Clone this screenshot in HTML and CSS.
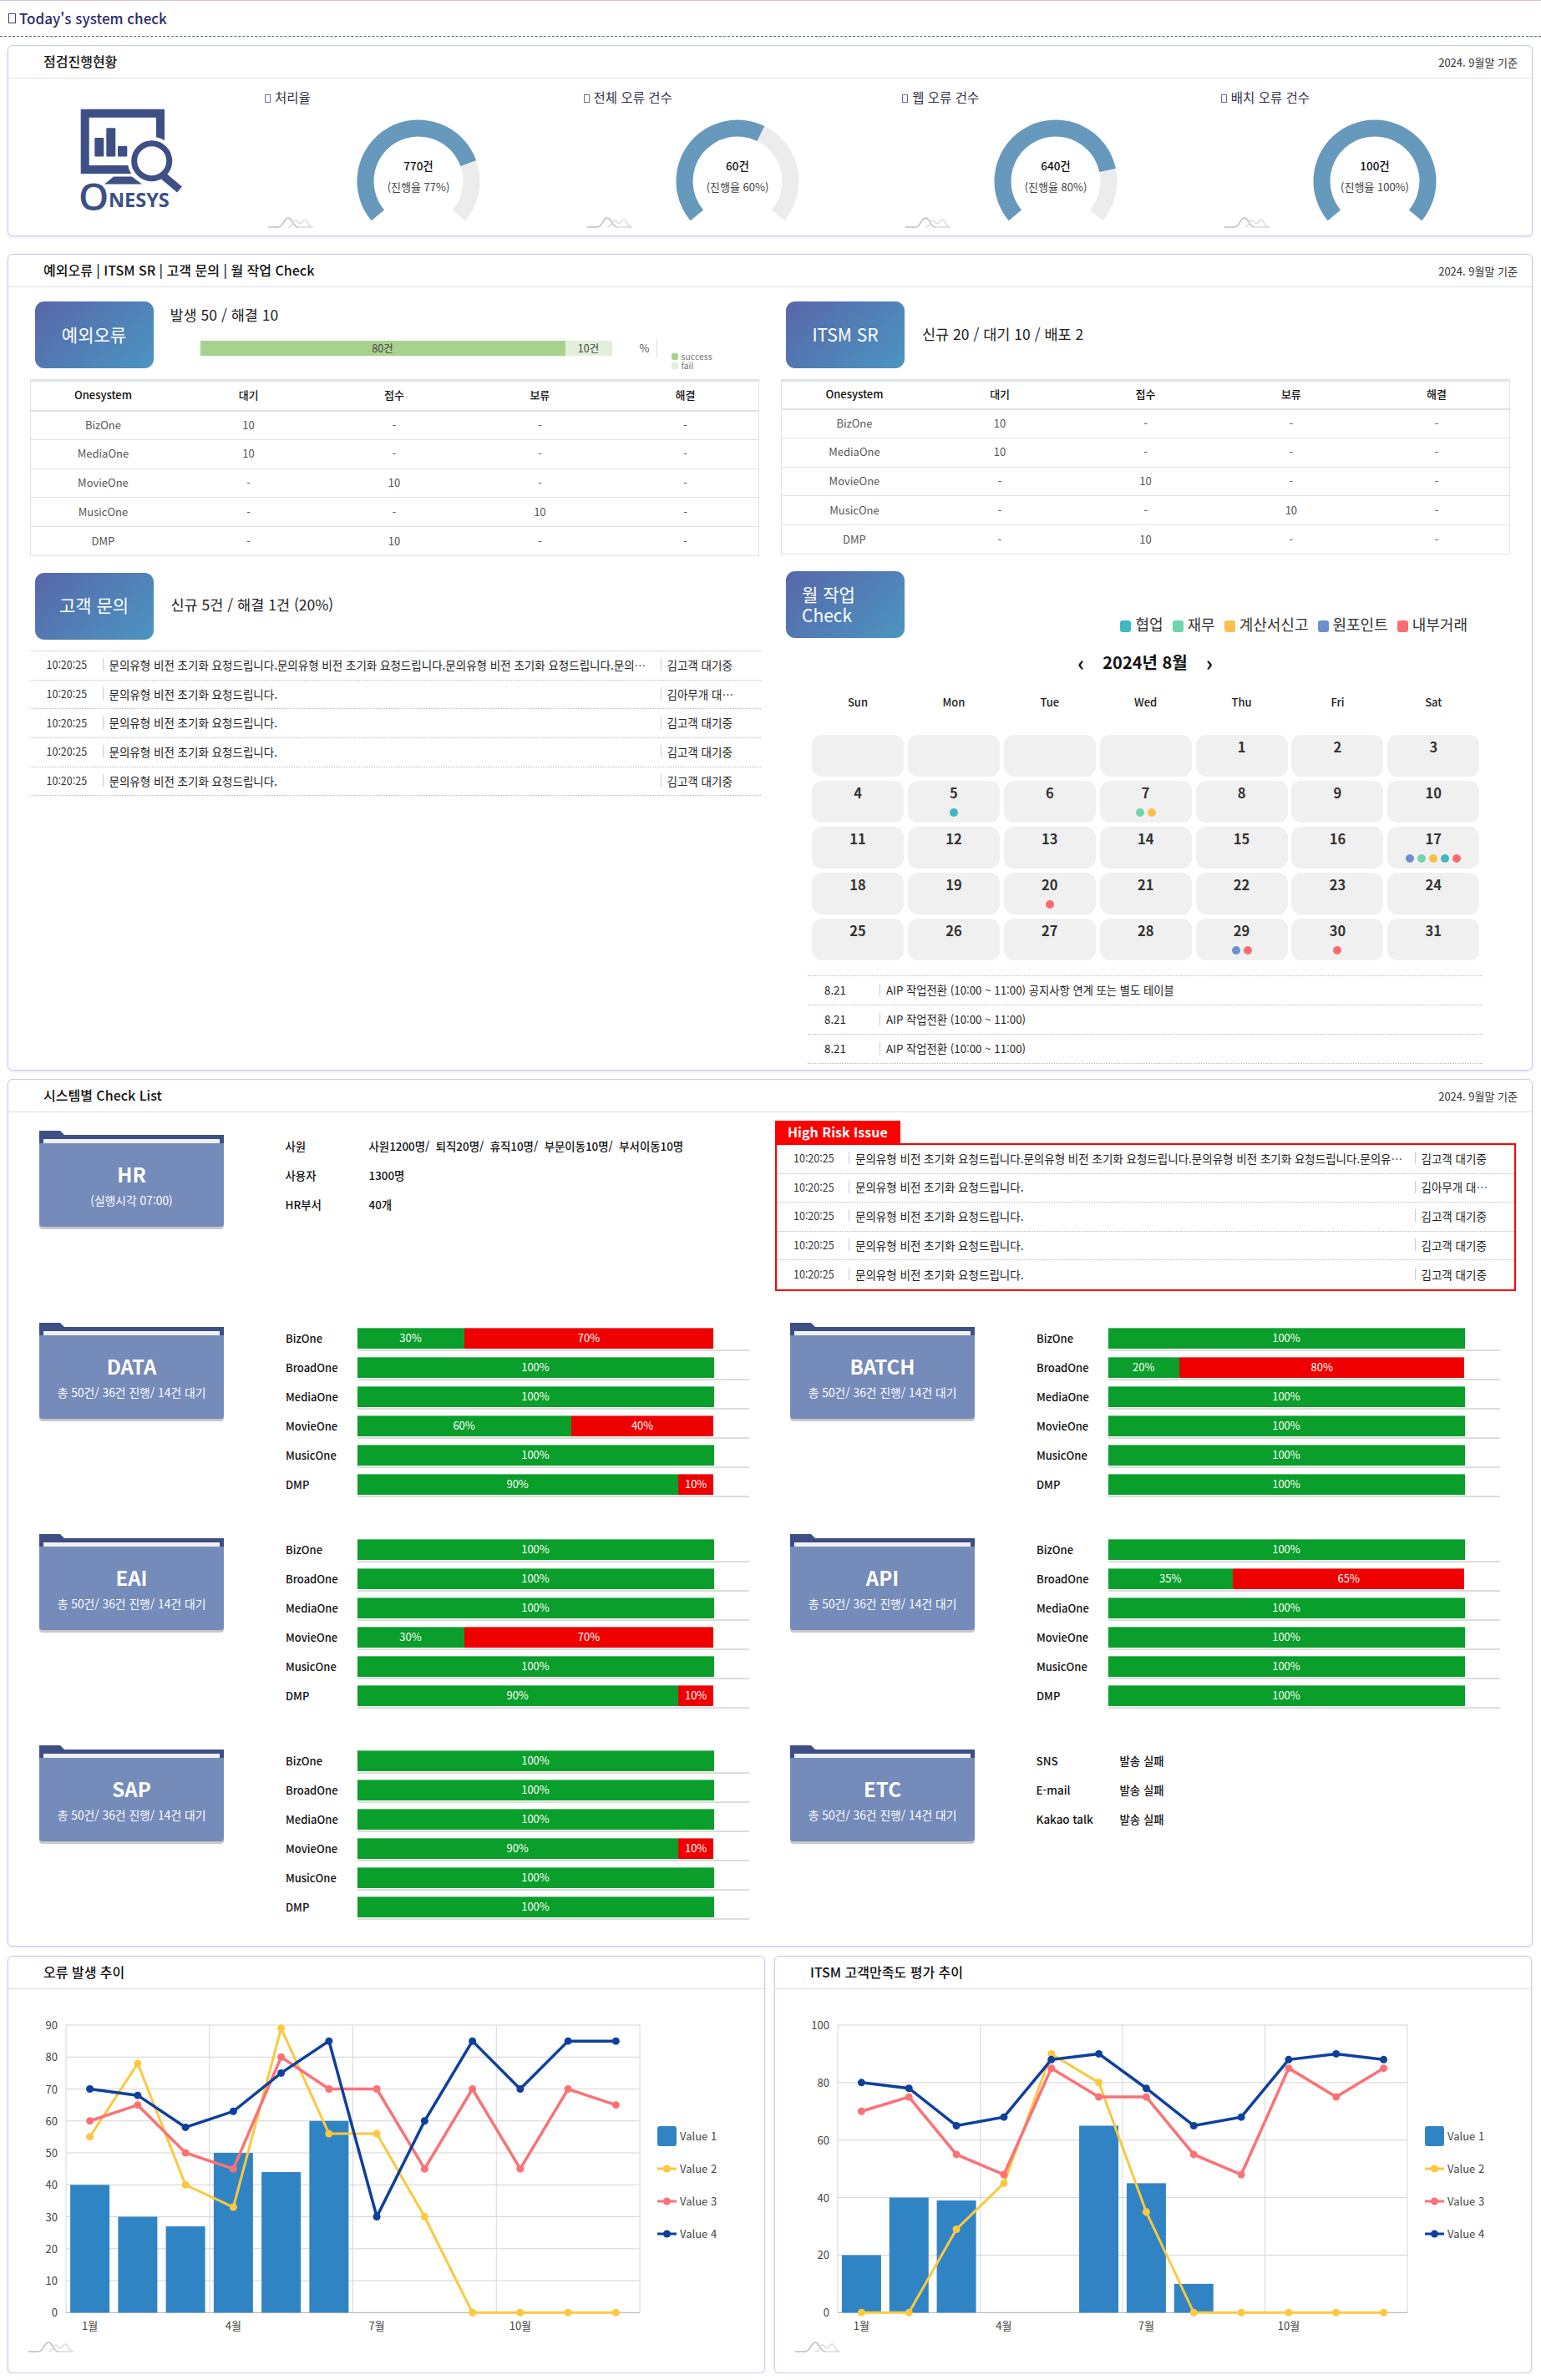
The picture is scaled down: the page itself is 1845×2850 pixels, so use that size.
FILE: index.html
```html
<!DOCTYPE html>
<html lang="ko">
<head>
    <meta charset="UTF-8">
    <meta name="viewport" content="width=device-width, initial-scale=1.0">
    <title>Today's system check</title>
    <link rel="stylesheet" href="styles.css">
</head>
<body>
    <div class="page-head"><span class="tofu tofu-big"></span>Today's system check</div>

    <div class="card card-status">
        <div class="card-head"><span class="card-title">점검진행현황</span><span class="card-date">2024. 9월말 기준</span></div>
        <div class="status-body">
            <div class="logo-box">
                <svg class="logo" viewBox="36 20 125 125" width="125" height="125">
                    <path d="M36.700 20.700H137V98H36.700Z M46.700 30.700V88H127V30.700Z" fill="#3d4f85" fill-rule="evenodd"/>
                    <path d="M65 110.500L76 101.500H98L110 110.500Z" fill="#3d4f85"/>
                    <rect x="53.300" y="55" width="11" height="22.500" rx="1" fill="#3d4f85"/>
                    <rect x="67.300" y="43.300" width="11" height="34.200" rx="1" fill="#3d4f85"/>
                    <rect x="81" y="65" width="11.300" height="12.500" rx="1" fill="#3d4f85"/>
                    <circle cx="121.700" cy="82.700" r="29" fill="#fff"/>
                    <path d="M136 101L155 117" stroke="#3d4f85" stroke-width="9" stroke-linecap="butt"/>
                    <circle cx="121.700" cy="82.700" r="21" fill="#fff" stroke="#3d4f85" stroke-width="7"/>
                    <text class="logo-o" x="34" y="142">O</text>
                    <text class="logo-word" x="70" y="138">NESYS</text>
                </svg>
            </div>
            <div class="gauge-grid" id="gauge-grid"></div>
        </div>
    </div>

    <div class="card card-check">
        <div class="card-head"><span class="card-title">예외오류 | ITSM SR | 고객 문의 | 월 작업 Check</span><span class="card-date">2024. 9월말 기준</span></div>
        <div class="check-body">
            <div class="check-col">
                <div class="tile-row">
                    <div class="tile">예외오류</div>
                    <div class="tile-side">
                        <div class="tile-note">발생 50 / 해결 10</div>
                        <div class="stack-wrap">
                            <div class="stack">
                                <div class="stack-ok">80건</div>
                                <div class="stack-fail">10건</div>
                            </div>
                            <span class="stack-unit">%</span>
                            <div class="stack-legend">
                                <div><i class="key key-ok"></i>success</div>
                                <div><i class="key key-fail"></i>fail</div>
                            </div>
                        </div>
                    </div>
                </div>
                <table class="one-table" id="table-error"></table>

                <div class="tile-row tile-row-next">
                    <div class="tile">고객 문의</div>
                    <div class="tile-note tile-note-mid">신규 5건 / 해결 1건 (20%)</div>
                </div>
                <div class="issue-list" id="list-customer"></div>
            </div>

            <div class="check-col">
                <div class="tile-row">
                    <div class="tile">ITSM SR</div>
                    <div class="tile-note tile-note-mid">신규 20 / 대기 10 / 배포 2</div>
                </div>
                <table class="one-table one-table-slim" id="table-sr"></table>

                <div class="tile-row tile-row-next">
                    <div class="tile tile-left">월 작업<br>Check</div>
                    <div class="cal-legend">
                        <span><i class="key-big c-team"></i>협업</span>
                        <span><i class="key-big c-money"></i>재무</span>
                        <span><i class="key-big c-tax"></i>계산서신고</span>
                        <span><i class="key-big c-point"></i>원포인트</span>
                        <span><i class="key-big c-inner"></i>내부거래</span>
                    </div>
                </div>
                <div class="cal-nav"><span class="cal-arrow">‹</span><span class="cal-month">2024년 8월</span><span class="cal-arrow">›</span></div>
                <div class="cal-week" id="cal-week"></div>
                <div class="cal-grid" id="cal-grid"></div>
                <div class="work-list" id="work-list"></div>
            </div>
        </div>
    </div>

    <div class="card card-system">
        <div class="card-head"><span class="card-title">시스템별 Check List</span><span class="card-date">2024. 9월말 기준</span></div>
        <div class="system-grid" id="system-grid"></div>
    </div>

    <div class="chart-row">
        <div class="card card-chart">
            <div class="card-head"><span class="card-title">오류 발생 추이</span></div>
            <svg class="chart" id="chart-error" viewBox="10 2382 905 459"></svg>
        </div>
        <div class="card card-chart">
            <div class="card-head"><span class="card-title">ITSM 고객만족도 평가 추이</span></div>
            <svg class="chart" id="chart-itsm" viewBox="929 2382 905 459"></svg>
        </div>
    </div>

    <script src="script.js"></script>
</body>
</html>
```

FILE: styles.css
```css
* {
    margin: 0;
    padding: 0;
    box-sizing: border-box;
}
body {
    width: 1845px;
    font-family: "Noto Sans CJK KR", "Noto Sans", sans-serif;
    font-size: 13px;
    color: #222;
    background-color: #fff;
}
.page-head {
    display: flex;
    align-items: center;
    height: 44px;
    padding: 0 0 1px 10px;
    border-top: 1px solid #d8c2cc;
    border-bottom: 1px dashed #5d6788;
    font-size: 17px;
    font-weight: 500;
    color: #2c2a6c;
}
.tofu {
    display: inline-block;
    width: 7px;
    height: 10px;
    margin-right: 5px;
    border: 1px solid #6a7090;
}
.tofu-big {
    width: 9px;
    height: 12px;
    margin-right: 4px;
    border-color: #40446a;
}

/* Cards */
.card {
    width: 1826px;
    margin-left: 9px;
    background-color: #fff;
    border: 1px solid #c6ccef;
    border-radius: 6px;
    box-shadow: 0 1px 3px rgba(120, 130, 190, 0.25);
}
.card-head {
    display: flex;
    justify-content: space-between;
    align-items: center;
    height: 39px;
    padding: 0 17px 3px 42px;
    border-bottom: 1px solid #dcdfe9;
}
.card-title {
    font-size: 16px;
    font-weight: 500;
    color: #111;
}
.card-date {
    padding-top: 4px;
    font-size: 13px;
    color: #333;
}
.card-status {
    height: 229px;
    margin-top: 10px;
}
.card-check {
    height: 978px;
    margin-top: 21px;
}
.card-system {
    height: 1039px;
    margin-top: 10px;
}

/* Status gauges */
.status-body {
    display: flex;
}
.logo-box {
    flex: none;
    width: 300px;
    padding: 36px 0 0 86px;
}
.logo-o {
    font-family: "Open Sans", sans-serif;
    font-size: 46px;
    font-weight: 600;
    fill: #3d4f85;
}
.logo-word {
    font-family: "Open Sans", sans-serif;
    font-size: 23.500px;
    font-weight: 700;
    fill: #3d4f85;
}
.gauge-grid {
    display: grid;
    flex: none;
    grid-template-columns: repeat(4, 381.600px);
}
.gauge-cell {
    position: relative;
    height: 188px;
    padding: 11px 0 0 7px;
}
.gauge-label {
    height: 37px;
    font-size: 15.500px;
    color: #334;
}
.gauge {
    display: block;
    margin-left: 109px;
}
.gauge-count {
    font-size: 13.500px;
    font-weight: 500;
    fill: #111;
    text-anchor: middle;
}
.gauge-rate {
    font-size: 13px;
    fill: #444;
    text-anchor: middle;
}
.mark {
    position: absolute;
    left: 11px;
    top: 166px;
}

/* Check section */
.check-body {
    display: grid;
    grid-template-columns: repeat(2, 874px);
    column-gap: 25.500px;
    padding: 17px 0 0 25.500px;
}
.tile-row {
    display: flex;
    height: 80px;
}
.tile-row-next {
    margin-top: 20px;
}
.tile {
    display: flex;
    justify-content: center;
    align-items: center;
    flex: none;
    width: 142px;
    height: 80px;
    margin-left: 6px;
    padding-bottom: 3px;
    border-radius: 11px;
    background-image: linear-gradient(135deg, #5867a8, #4b95c1);
    font-size: 21px;
    color: #fff;
}
.tile-left {
    justify-content: flex-start;
    padding: 0 0 0 19px;
    line-height: 25px;
}
.tile-side {
    margin-left: 20px;
    padding-top: 3px;
}
.tile-note {
    font-size: 17.500px;
    line-height: 25px;
    color: #222;
}
.tile-note-mid {
    align-self: center;
    margin-left: 21px;
    padding-bottom: 4px;
}
.stack-wrap {
    position: relative;
    margin-top: 19px;
    height: 40px;
    width: 620px;
}
.stack {
    display: flex;
    width: 493px;
    height: 18px;
    margin-left: 36px;
    line-height: 18px;
    font-size: 12.500px;
    text-align: center;
    color: #444;
}
.stack-ok {
    width: 437px;
    background-color: #a9d18e;
}
.stack-fail {
    width: 56px;
    background-color: #e2efd9;
}
.stack-unit {
    position: absolute;
    left: 562px;
    top: -2px;
    padding-right: 9px;
    border-right: 1px solid #ddd;
    line-height: 22px;
    color: #555;
}
.stack-legend {
    position: absolute;
    left: 600px;
    top: 13px;
    font-size: 10.500px;
    line-height: 11px;
    color: #777;
    width: 60px;
}
.key {
    display: inline-block;
    width: 8px;
    height: 8px;
    margin-right: 4px;
    border-radius: 2px;
}
.key-ok {
    background-color: #a9d18e;
}
.key-fail {
    background-color: #e2efd9;
}

/* Tables */
.one-table {
    width: 873px;
    margin-top: 13px;
    border-collapse: collapse;
    table-layout: fixed;
    border-left: 1px solid #dfe2e6;
    border-right: 1px solid #dfe2e6;
    border-top: 3px solid #dfe2e6;
}
.one-table th {
    height: 36px;
    padding-bottom: 2px;
    border-bottom: 2px solid #dfe2e6;
    font-size: 13px;
    font-weight: 500;
    color: #111;
}
.one-table td {
    height: 34.800px;
    padding-bottom: 2px;
    border-bottom: 1px solid #dfe2e6;
    font-size: 13px;
    text-align: center;
    color: #555;
}
.one-table-slim {
    margin-bottom: 2px;
}
.one-table-slim th {
    height: 34px;
}

/* Issue rows */
.issue-list {
    width: 875px;
    margin-top: 13px;
    border-top: 1px dotted #bbb;
}
.issue-row {
    display: flex;
    align-items: center;
    height: 34.700px;
    padding-bottom: 2px;
    border-bottom: 1px dotted #bbb;
    font-size: 13.500px;
    color: #222;
}
.issue-time {
    flex: none;
    width: 87px;
    padding-left: 20px;
    font-size: 12.500px;
    color: #333;
}
/* 15px separator drawn as a background so the text line can stay tall enough */
.issue-msg,
.issue-who {
    flex: none;
    background: linear-gradient(#ccc, #ccc) left center / 1px 15px no-repeat;
    line-height: 20px;
    overflow: hidden;
    white-space: nowrap;
    text-overflow: ellipsis;
}
.issue-msg {
    width: 668px;
    padding: 0 8px 0 8px;
}
.issue-who {
    width: 88px;
    padding-left: 8px;
}

/* Calendar */
.cal-legend {
    display: flex;
    align-self: flex-end;
    gap: 11px;
    margin: 0 52px 6px auto;
    height: 21px;
    font-size: 18px;
    line-height: 21px;
    color: #333;
}
.key-big {
    display: inline-block;
    width: 13px;
    height: 14px;
    margin-right: 5px;
    border-radius: 3px;
    vertical-align: -2px;
}
.c-team {
    background-color: #40b8c1;
}
.c-money {
    background-color: #6fd3ae;
}
.c-tax {
    background-color: #f9c04e;
}
.c-point {
    background-color: #6c8fd0;
}
.c-inner {
    background-color: #fb6b72;
}
.cal-nav {
    display: flex;
    justify-content: center;
    align-items: center;
    gap: 22px;
    height: 30px;
    margin-top: 14px;
    width: 872px;
}
.cal-month {
    font-size: 20px;
    font-weight: 700;
    color: #111;
}
.cal-arrow {
    font-size: 25px;
    font-weight: 700;
    line-height: 24px;
    color: #111;
}
.cal-week {
    display: grid;
    grid-template-columns: repeat(7, 110px);
    column-gap: 4.900px;
    margin: 20px 0 0 37px;
    height: 26px;
    font-size: 13px;
    font-weight: 500;
    line-height: 26px;
    text-align: center;
    color: #222;
}
.cal-grid {
    display: grid;
    grid-template-columns: repeat(7, 110px);
    grid-auto-rows: 50px;
    gap: 5px 4.900px;
    margin: 26px 0 0 37px;
}
.cal-day {
    padding-top: 3px;
    border-radius: 12px;
    background-color: #f0f0f0;
    font-size: 16.500px;
    font-weight: 700;
    line-height: 22px;
    text-align: center;
    color: #333;
}
.cal-dots {
    display: flex;
    justify-content: center;
    gap: 4px;
    margin-top: 8px;
}
.cal-dots i {
    width: 10px;
    height: 10px;
    border-radius: 50%;
}
.work-list {
    width: 808px;
    margin: 18px 0 0 32px;
    border-top: 1px dotted #bbb;
}
.work-row {
    display: flex;
    align-items: center;
    height: 35px;
    border-bottom: 1px dotted #bbb;
    font-size: 13.300px;
    color: #222;
}
.work-date {
    flex: none;
    width: 86px;
    padding-left: 20px;
}
.work-text {
    padding-left: 7px;
    border-left: 1px solid #ccc;
    line-height: 15px;
}

/* System list */
.system-grid {
    display: grid;
    grid-template-columns: repeat(2, 899px);
    grid-template-rows: 230px repeat(3, 253px);
    padding: 22px 0 0 37px;
}
.system {
    display: flex;
}
.folder {
    flex: none;
    width: 221px;
}
.folder-tab {
    width: 30px;
    height: 5px;
    background-color: #3f4f86;
    clip-path: polygon(0 0, 25px 0, 30px 100%, 0 100%);
}
.folder-band {
    height: 10px;
    padding: 5px 5px 0;
    background-color: #3f4f86;
}
.folder-band div {
    height: 5px;
    background-color: #f0f1f5;
}
.folder-body {
    height: 100px;
    padding-top: 19px;
    border-radius: 0 0 4px 4px;
    background-color: #758bb9;
    box-shadow: 0 3px 0 #c8c8c8;
    text-align: center;
    color: #fff;
}
.folder-name {
    font-size: 24px;
    font-weight: 700;
    line-height: 36px;
}
.folder-sub {
    margin-top: 4px;
    font-size: 13.800px;
    line-height: 18px;
}
.system-rows {
    margin-left: 74px;
    padding-top: 6px;
}
.info-rows {
    margin-left: 73.500px;
}
.info-row {
    display: flex;
    align-items: center;
    height: 35px;
    font-size: 13.400px;
    font-weight: 500;
    color: #111;
}
.info-row span:first-child {
    width: 100px;
}
.stat-row {
    display: flex;
    height: 35px;
}
.stat-name {
    width: 85.500px;
    height: 25px;
    font-size: 13px;
    font-weight: 500;
    line-height: 25px;
    color: #111;
}
.stat-track {
    width: 469px;
    height: 28px;
    border-bottom: 2px solid #ddd;
}
.stat-bar {
    display: flex;
    width: 427px;
    height: 25px;
    font-size: 13px;
    text-align: center;
    color: #fff;
}
.seg-ok {
    background-color: #0a9e2b;
    border-top: 1px solid #5fc078;
    line-height: 22px;
}
.seg-bad {
    background-color: #ee0000;
    border-top: 1px solid #f06060;
    line-height: 22px;
}

/* High risk box */
.risk {
    width: 887px;
    margin: -12px 0 0 -18px;
}
.risk-title {
    width: 150px;
    height: 27px;
    padding-left: 15px;
    background-color: #fe0000;
    font-size: 16px;
    font-weight: 700;
    line-height: 27px;
    color: #fff;
}
.risk-box {
    height: 177px;
    border: 2px solid #fe0000;
}
.risk-box .issue-row {
    width: 100%;
    height: 34.600px;
}
.risk-box .issue-row:last-child {
    border-bottom: none;
}
.risk-box .issue-time {
    width: 86px;
}
.risk-box .issue-msg {
    width: 677.500px;
}

/* Charts */
.chart-row {
    display: flex;
    gap: 11px;
    margin: 11px 0 0 9px;
}
.card-chart {
    flex: none;
    width: 907px;
    height: 500px;
    margin-left: 0;
}
.chart {
    display: block;
    width: 905px;
    height: 459px;
}
.axis-text {
    font-size: 13px;
    fill: #444;
}
```

FILE: script.js
```js
const SVG_MARK = `<svg class="mark" width="54" height="13" viewBox="0 0 54 13">
    <path d="M0 12H12C18 12 19 1 24 1C29 1 30 12 36 12" fill="none" stroke="#bdbdbd" stroke-width="1.500"/>
    <path d="M24 12C30 12 29 4 33 4C36 4 36 8 38 8C41 8 41 3 44 3C48 3 47 12 54 12H36" fill="none" stroke="#dcdcdc" stroke-width="1.500"/>
</svg>`;

// gauges
const gauges = [
    { label: '처리율', count: '770건', rate: 77 },
    { label: '전체 오류 건수', count: '60건', rate: 60 },
    { label: '웹 오류 건수', count: '640건', rate: 80 },
    { label: '배치 오류 건수', count: '100건', rate: 100 },
];

function polar(radius, deg) {
    const rad = deg * Math.PI / 180;
    return (radius * Math.sin(rad)).toFixed(2) + ' ' + (-radius * Math.cos(rad)).toFixed(2);
}

function ringPath(from, to) {
    const large = to - from > 180 ? 1 : 0;
    return `M${polar(73.5, from)}A73.5 73.5 0 ${large} 1 ${polar(73.5, to)}` +
        `L${polar(53.5, to)}A53.5 53.5 0 ${large} 0 ${polar(53.5, from)}Z`;
}

document.getElementById('gauge-grid').innerHTML = gauges.map(g => {
    const end = -130 + 260 * g.rate / 100;
    return `<div class="gauge-cell">
        <div class="gauge-label"><span class="tofu"></span>${g.label}</div>
        <svg class="gauge" width="150" height="125" viewBox="-75 -75 150 125">
            <path d="${ringPath(-130, 130)}" fill="#ececec"/>
            <path d="${ringPath(-130, end)}" fill="#6699bc"/>
            <text class="gauge-count" y="-13">${g.count}</text>
            <text class="gauge-rate" y="12">(진행율 ${g.rate}%)</text>
        </svg>
        ${SVG_MARK}
    </div>`;
}).join('');

// system tables
const tableRows = [
    ['BizOne', '10', '-', '-', '-'],
    ['MediaOne', '10', '-', '-', '-'],
    ['MovieOne', '-', '10', '-', '-'],
    ['MusicOne', '-', '-', '10', '-'],
    ['DMP', '-', '10', '-', '-'],
];
const tableHtml = '<tr><th>Onesystem</th><th>대기</th><th>접수</th><th>보류</th><th>해결</th></tr>' +
    tableRows.map(r => '<tr>' + r.map(c => `<td>${c}</td>`).join('') + '</tr>').join('');
document.getElementById('table-error').innerHTML = tableHtml;
document.getElementById('table-sr').innerHTML = tableHtml;

// issue rows
const shortMsg = '문의유형 비전 초기화 요청드립니다.';
const issueRows = [
    [shortMsg.repeat(4), '김고객 대기중'],
    [shortMsg, '김아무개 대기중'],
    [shortMsg, '김고객 대기중'],
    [shortMsg, '김고객 대기중'],
    [shortMsg, '김고객 대기중'],
];
const issueHtml = issueRows.map(r => `<div class="issue-row">
    <span class="issue-time">10:20:25</span>
    <span class="issue-msg">${r[0]}</span>
    <span class="issue-who">${r[1]}</span>
</div>`).join('');
document.getElementById('list-customer').innerHTML = issueHtml;

// calendar
document.getElementById('cal-week').innerHTML =
    ['Sun', 'Mon', 'Tue', 'Wed', 'Thu', 'Fri', 'Sat'].map(d => `<div>${d}</div>`).join('');

const dayDots = {
    5: ['#40b8c1'],
    7: ['#6fd3ae', '#f9c04e'],
    17: ['#6c8fd0', '#6fd3ae', '#f9c04e', '#40b8c1', '#fb6b72'],
    20: ['#fb6b72'],
    29: ['#6c8fd0', '#fb6b72'],
    30: ['#fb6b72'],
};
let calHtml = '<div class="cal-day"></div>'.repeat(4);
for (let day = 1; day <= 31; day++) {
    const dots = (dayDots[day] || []).map(c => `<i style="background-color:${c}"></i>`).join('');
    calHtml += `<div class="cal-day">${day}<div class="cal-dots">${dots}</div></div>`;
}
document.getElementById('cal-grid').innerHTML = calHtml;

document.getElementById('work-list').innerHTML = [
    'AIP 작업전환 (10:00 ~ 11:00) 공지사항 연계 또는 별도 테이블',
    'AIP 작업전환 (10:00 ~ 11:00)',
    'AIP 작업전환 (10:00 ~ 11:00)',
].map(t => `<div class="work-row"><span class="work-date">8.21</span><span class="work-text">${t}</span></div>`).join('');

// system list
const rowNames = ['BizOne', 'BroadOne', 'MediaOne', 'MovieOne', 'MusicOne', 'DMP'];
const progress = '총 50건/ 36건 진행/ 14건 대기';
const systems = [
    { name: 'HR', sub: '(실행시각 07:00)', info: [['사원', '사원1200명/&nbsp; 퇴직20명/&nbsp; 휴직10명/&nbsp; 부문이동10명/&nbsp; 부서이동10명'], ['사용자', '1300명'], ['HR부서', '40개']] },
    { risk: true },
    { name: 'DATA', sub: progress, bars: [30, 100, 100, 60, 100, 90] },
    { name: 'BATCH', sub: progress, bars: [100, 20, 100, 100, 100, 100] },
    { name: 'EAI', sub: progress, bars: [100, 100, 100, 30, 100, 90] },
    { name: 'API', sub: progress, bars: [100, 35, 100, 100, 100, 100] },
    { name: 'SAP', sub: progress, bars: [100, 100, 100, 90, 100, 100] },
    { name: 'ETC', sub: progress, info: [['SNS', '발송 실패'], ['E-mail', '발송 실패'], ['Kakao talk', '발송 실패']] },
];

function folderHtml(s) {
    return `<div class="folder">
        <div class="folder-tab"></div>
        <div class="folder-band"><div></div></div>
        <div class="folder-body">
            <div class="folder-name">${s.name}</div>
            <div class="folder-sub">${s.sub}</div>
        </div>
    </div>`;
}

function barHtml(ok) {
    const bad = 100 - ok;
    const badSeg = bad ? `<div class="seg-bad" style="width:${bad}%">${bad}%</div>` : '';
    return `<div class="stat-bar"><div class="seg-ok" style="width:${ok}%">${ok}%</div>${badSeg}</div>`;
}

document.getElementById('system-grid').innerHTML = systems.map(s => {
    if (s.risk) {
        return `<div class="risk"><div class="risk-title">High Risk Issue</div><div class="risk-box">${issueHtml}</div></div>`;
    }
    if (s.info) {
        const rows = s.info.map(r => `<div class="info-row"><span>${r[0]}</span><span>${r[1]}</span></div>`).join('');
        return `<div class="system">${folderHtml(s)}<div class="info-rows">${rows}</div></div>`;
    }
    const rows = s.bars.map((ok, i) => `<div class="stat-row">
        <div class="stat-name">${rowNames[i]}</div>
        <div class="stat-track">${barHtml(ok)}</div>
    </div>`).join('');
    return `<div class="system">${folderHtml(s)}<div class="system-rows">${rows}</div></div>`;
}).join('');

// charts, drawn in page coordinates through the viewBox
function drawChart(id, c) {
    const bottom = 2769.3, top = 2425;
    const catW = (c.right - c.left) / 12;
    const yOf = v => bottom - v * (bottom - top) / c.max;
    const xOf = i => c.left + catW * (i + 0.5);
    let out = '';

    for (let v = 0; v <= c.max; v += c.step) {
        out += `<line x1="${c.left}" x2="${c.right}" y1="${yOf(v)}" y2="${yOf(v)}" stroke="${v ? '#d4d4d4' : '#aaa'}"/>`;
        out += `<text class="axis-text" x="${c.left - 10}" y="${yOf(v) + 5}" text-anchor="end">${v}</text>`;
    }
    for (let i = 0; i <= 12; i += 3) {
        const x = c.left + catW * i;
        out += `<line x1="${x}" x2="${x}" y1="${top}" y2="${bottom}" stroke="#d8d8d8"/>`;
    }
    for (let i = 0; i < 12; i += 3) {
        out += `<text class="axis-text" x="${xOf(i)}" y="2790" text-anchor="middle">${i + 1}월</text>`;
    }
    c.bars.forEach((v, i) => {
        out += `<rect x="${xOf(i) - 23.500}" y="${yOf(v)}" width="47" height="${bottom - yOf(v)}" fill="#3184c4"/>`;
    });
    c.lines.forEach(l => {
        const pts = l.data.map((v, i) => `${xOf(i)},${yOf(v)}`).join(' ');
        out += `<polyline points="${pts}" fill="none" stroke="${l.color}" stroke-width="${l.width}"/>`;
        l.data.forEach((v, i) => {
            out += `<circle cx="${xOf(i)}" cy="${yOf(v)}" r="4.500" fill="${l.color}"/>`;
        });
    });

    // legend
    out += `<rect x="${c.legendX}" y="2546" width="23" height="24" rx="3" fill="#3184c4"/>`;
    out += `<text class="axis-text" x="${c.legendX + 27}" y="2563">Value 1</text>`;
    c.lines.forEach((l, i) => {
        const y = 2597 + i * 39;
        out += `<line x1="${c.legendX}" x2="${c.legendX + 23}" y1="${y}" y2="${y}" stroke="${l.color}" stroke-width="3"/>`;
        out += `<circle cx="${c.legendX + 11.500}" cy="${y}" r="4.500" fill="${l.color}"/>`;
        out += `<text class="axis-text" x="${c.legendX + 27}" y="${y + 5}">Value ${i + 2}</text>`;
    });

    // chart watermark
    out += `<g transform="translate(${c.markX} 2804)">
        <path d="M0 12H12C18 12 19 1 24 1C29 1 30 12 36 12" fill="none" stroke="#bdbdbd" stroke-width="1.500"/>
        <path d="M24 12C30 12 29 4 33 4C36 4 36 8 38 8C41 8 41 3 44 3C48 3 47 12 54 12H36" fill="none" stroke="#dcdcdc" stroke-width="1.500"/>
    </g>`;
    document.getElementById(id).innerHTML = out;
}

const YELLOW = '#fcc83f', RED = '#fb7276', BLUE = '#0f409c';

drawChart('chart-error', {
    left: 79, right: 766, max: 90, step: 10, legendX: 787, markX: 34,
    bars: [40, 30, 27, 50, 44, 60],
    lines: [
        { color: YELLOW, width: 3, data: [55, 78, 40, 33, 89, 56, 56, 30, 0, 0, 0, 0] },
        { color: RED, width: 3.500, data: [60, 65, 50, 45, 80, 70, 70, 45, 70, 45, 70, 65] },
        { color: BLUE, width: 3.500, data: [70, 68, 58, 63, 75, 85, 30, 60, 85, 70, 85, 85] },
    ],
});

drawChart('chart-itsm', {
    left: 1004, right: 1686, max: 100, step: 20, legendX: 1707, markX: 953,
    bars: [20, 40, 39, 0, 0, 65, 45, 10, 0, 0, 0, 0],
    lines: [
        { color: YELLOW, width: 3, data: [0, 0, 29, 45, 90, 80, 35, 0, 0, 0, 0, 0] },
        { color: RED, width: 3.500, data: [70, 75, 55, 48, 85, 75, 75, 55, 48, 85, 75, 85] },
        { color: BLUE, width: 3.500, data: [80, 78, 65, 68, 88, 90, 78, 65, 68, 88, 90, 88] },
    ],
});
```
